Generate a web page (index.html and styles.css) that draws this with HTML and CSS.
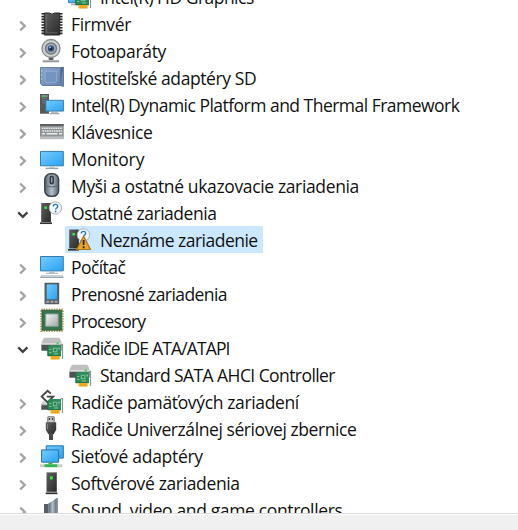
FILE: index.html
```html
<!DOCTYPE html>
<html lang="sk">

<head>
    <meta charset="UTF-8">
    <meta name="viewport" content="width=device-width, initial-scale=1.0">
    <title>Správca zariadení</title>
    <link rel="stylesheet" href="styles.css">
</head>

<body>
    <main class="window">
        <ul class="tree">
            <li class="row child hd">
                <svg class="icon" viewBox="0 0 24 24">
                    <path d="M.5 6h17v12.7H.5z" fill="url(#screen)" stroke="#397ca7" />
                    <path d="M3 20.5h7" stroke="#aaa" stroke-width="1.5" />
                    <use href="#card" />
                </svg>
                <span class="label">Intel(R) HD Graphics</span>
            </li>
            <li class="row firmware">
                <svg class="arrow"><use href="#closed" /></svg>
                <svg class="icon" viewBox="0 0 24 24">
                    <path d="M3 2v22M21 2v22" stroke="#242424" stroke-width="3" stroke-dasharray="1.6 1.2" />
                    <path d="M4.3 2h5q2.7 2.4 5.4 0h5v22H4.3z" fill="url(#dark)" stroke="#252525" />
                    <path d="M6.4 4v17.8h11.2" fill="none" stroke="#707070" stroke-width=".7" />
                </svg>
                <span class="label">Firmvér</span>
            </li>
            <li class="row camera">
                <svg class="arrow"><use href="#closed" /></svg>
                <svg class="icon" viewBox="0 0 24 24">
                    <path d="M8.7 18h4.7v4H8.7z" fill="#5b5d60" />
                    <path d="M2.7 23.3H19" stroke="#96999b" stroke-width="2" />
                    <circle cx="11" cy="10.5" r="9" fill="#d0d1d2" stroke="#85888a" stroke-width="1.3" />
                    <circle cx="11" cy="10.5" r="6.2" fill="#777b80" />
                    <circle cx="11" cy="10.5" r="4.7" fill="#a3b1c3" />
                    <circle cx="11" cy="10.5" r="3.2" fill="#395679" />
                    <circle cx="11" cy="10.8" r="1.5" fill="#172a44" />
                    <circle cx="10" cy="9.3" r="1" fill="#8fb0d7" />
                </svg>
                <span class="label">Fotoaparáty</span>
            </li>
            <li class="row host">
                <svg class="arrow"><use href="#closed" /></svg>
                <svg class="icon" viewBox="0 0 24 24">
                    <path d="M.5 2.6h19.8l3.2-.4v19.3l-3.2-1H2.3L.5 18.7z" fill="url(#sd)" stroke="#5c7298" stroke-width=".9" />
                    <path d="M20.3 2.7v17.7l3-18.1z" fill="#50688e" />
                    <path d="M5 6.3h11.8v9.8l-1.8 1.7H6.7L5 16.2z" fill="#7595c1" stroke="#a2b9d9" stroke-width=".7" />
                    <path d="M1.6 5v2M1.6 9v2M1.6 13v2" stroke="#bed1e9" stroke-width=".7" />
                </svg>
                <span class="label">Hostiteľské adaptéry SD</span>
            </li>
            <li class="row platform">
                <svg class="arrow"><use href="#closed" /></svg>
                <svg class="icon" viewBox="0 0 24 24">
                    <path d="M0 2h9v19.7H0z" fill="#55595b" />
                    <path d="M1.4 3.2h6.3v2H1.4z" fill="#8a9090" />
                    <path d="M2.5 3.2h2v2h-2z" fill="#30cc42" />
                    <path d="M2 6.8h5M2 8.8h3M2 10.8h3" stroke="#777d7f" />
                    <path d="M5.8 8.3h17.7v10.8H5.8z" fill="url(#screen)" stroke="#317aa8" stroke-width=".9" />
                    <path d="M11 20.1h7M9.5 21.6h10" stroke="#9fabb3" stroke-width="1.1" />
                </svg>
                <span class="label">Intel(R) Dynamic Platform and Thermal Framework</span>
            </li>
            <li class="row keyboard">
                <svg class="arrow"><use href="#closed" /></svg>
                <svg class="icon" viewBox="0 0 24 24">
                    <path d="M0 5h23.7v15H0z" fill="#8e9396" />
                    <path d="M0 6h23.7" stroke="#5d6063" stroke-width="2" />
                    <path d="M1.7 9.3h20.5M2.4 12h19.5" stroke="#eee" stroke-width="1.6" stroke-dasharray="1.6 .7" />
                    <path d="M2 14.7h3M6.5 14.7h11M19 14.7h3" stroke="#eee" stroke-width="1.5" />
                    <path d="M0 17.4h23.7v2.8H0z" fill="#b9bdbf" />
                </svg>
                <span class="label">Klávesnice</span>
            </li>
            <li class="row monitors">
                <svg class="arrow"><use href="#closed" /></svg>
                <svg class="icon" viewBox="0 0 24 24">
                    <path d="M.5 5.4h22.8v14.4H.5z" fill="url(#screen)" stroke="#367ca6" />
                    <path d="M9 20.3h5.6v1.4H9z" fill="#bbc7ce" />
                    <path d="M5.5 22.4h12.8" stroke="#91a5b1" stroke-width="1.4" />
                </svg>
                <span class="label">Monitory</span>
            </li>
            <li class="row mice">
                <svg class="arrow"><use href="#closed" /></svg>
                <svg class="icon" viewBox="0 0 24 24">
                    <rect x="4.8" y=".8" width="13.8" height="22.5" rx="5.8" fill="url(#steel)" stroke="#3c444c" stroke-width="1.5" />
                    <path d="M5.3 12.5q6.4 3 12.8 0" fill="none" stroke="#56626d" />
                    <rect x="9.5" y="2.6" width="4.4" height="9" rx="2" fill="#303941" />
                    <path d="M11.7 4.2v5.4" stroke="#9ba9b8" stroke-width="1.3" />
                </svg>
                <span class="label">Myši a ostatné ukazovacie zariadenia</span>
            </li>
            <li class="row other">
                <svg class="arrow"><use href="#open" /></svg>
                <svg class="icon" viewBox="0 0 24 24">
                    <path d="M1.2 3h9.7v19H1.2z" fill="url(#dark)" />
                    <path d="M4.3 6.4h2.8v2.5H4.3z" fill="#35e543" />
                    <path d="M0 23.2h12" stroke="#333" stroke-width="1.7" />
                    <use href="#bubble" />
                </svg>
                <span class="label">Ostatné zariadenia</span>
            </li>
            <li class="row child unknown selected">
                <svg class="icon" viewBox="0 0 24 24">
                    <path d="M1.2 2.5h9.7v19H1.2z" fill="url(#dark)" />
                    <path d="M4.3 6h2.8v2.5H4.3z" fill="#35e543" />
                    <path d="M0 22.8h11" stroke="#333" stroke-width="1.7" />
                    <use href="#bubble" />
                    <path d="M15.6 9.3 22.6 22.5H8.6z" fill="#e9a62c" stroke="#a8731d" stroke-width="1.2" stroke-linejoin="round" />
                    <path d="M15.6 13v5M15.6 19.3v1.9" stroke="#24211a" stroke-width="1.8" />
                </svg>
                <span class="label">Neznáme zariadenie</span>
            </li>
            <li class="row computer">
                <svg class="arrow"><use href="#closed" /></svg>
                <svg class="icon" viewBox="0 0 24 24">
                    <path d="M.5 2.5h22.8v14.4H.5z" fill="url(#screen)" stroke="#367ca6" />
                    <path d="M9 17.4h5.6v1.5H9z" fill="#aab9c2" />
                    <path d="M6 19.3h12" stroke="#a5b3bc" />
                    <path d="M1 21.6h21.8l.9 2.5H0z" fill="#9aa9b7" />
                    <path d="M2 22.3h20" stroke="#e1e8ee" stroke-width=".7" />
                </svg>
                <span class="label">Počítač</span>
            </li>
            <li class="row portable">
                <svg class="arrow"><use href="#closed" /></svg>
                <svg class="icon" viewBox="0 0 24 24">
                    <rect x="4.5" y="1.8" width="14.7" height="21.5" rx=".8" fill="#575c60" />
                    <path d="M6.7 3.4h10.4v14.9H6.7z" fill="url(#screen)" />
                    <path d="M6.2 20.8h3M10.4 20.8h3M14.6 20.8h3" stroke="#a6abae" stroke-width="2" />
                </svg>
                <span class="label">Prenosné zariadenia</span>
            </li>
            <li class="row cpu">
                <svg class="arrow"><use href="#closed" /></svg>
                <svg class="icon" viewBox="0 0 24 24">
                    <rect x="1.1" y="1.4" width="21.7" height="21.6" fill="none" stroke="#b99a4a" stroke-width="2" stroke-dasharray="1.3 1.25" />
                    <path d="M2 2.2h19.8v20H2z" fill="#37754e" stroke="#22563a" stroke-width=".8" />
                    <path d="M5.7 6h12.4v12.2H5.7z" fill="url(#metal)" stroke="#8fa598" />
                </svg>
                <span class="label">Procesory</span>
            </li>
            <li class="row ide">
                <svg class="arrow"><use href="#open" /></svg>
                <svg class="icon" viewBox="0 0 24 24">
                    <use href="#drive" />
                    <use href="#card" />
                </svg>
                <span class="label">Radiče IDE ATA/ATAPI</span>
            </li>
            <li class="row child sata">
                <svg class="icon" viewBox="0 0 24 24">
                    <use href="#drive" />
                    <use href="#card" />
                </svg>
                <span class="label">Standard SATA AHCI Controller</span>
            </li>
            <li class="row storage">
                <svg class="arrow"><use href="#closed" /></svg>
                <svg class="icon" viewBox="0 0 24 24">
                    <path d="M3.5 11.5h16l2.5 4H1z" fill="#cecfd0" />
                    <path d="M1 15.5h19V21H1z" fill="#85898b" />
                    <path d="M2 16.5h10v3.7H2z" fill="#4d5153" />
                    <path d="M10.8 4.6 7.6 1.8 1.6 7.5l6 6 5.6-5.8H6.8M13.2 7.7h1.2" fill="none" stroke="#fff" stroke-width="3" />
                    <path d="M10.8 4.6 7.6 1.8 1.6 7.5l6 6 5.6-5.8H6.8" fill="none" stroke="#444" stroke-width="1.8" />
                    <use href="#card" />
                </svg>
                <span class="label">Radiče pamäťových zariadení</span>
            </li>
            <li class="row usb">
                <svg class="arrow"><use href="#closed" /></svg>
                <svg class="icon" viewBox="0 0 24 24">
                    <path d="M7.8.8h6.4v6.5H7.8z" fill="#c8cacb" stroke="#74787a" />
                    <path d="M9.5 2v2M12.5 2v2" stroke="#333" stroke-width="1.2" />
                    <path d="M5.8 6.3h10.4v7.5l-2.5 4.5H8.3l-2.5-4.5z" fill="url(#dark)" />
                    <path d="M9 17h4v7H9z" fill="#494949" />
                    <path d="M7.4 7.5v6" stroke="#888" />
                </svg>
                <span class="label">Radiče Univerzálnej sériovej zbernice</span>
            </li>
            <li class="row network">
                <svg class="arrow"><use href="#closed" /></svg>
                <svg class="icon" viewBox="0 0 24 24">
                    <path d="M6.2 2.8h17.1v12.3H6.2z" fill="url(#screen)" stroke="#2773a3" />
                    <path d="M1.6 6.9h17v12.3h-17z" fill="url(#screen)" stroke="#2773a3" />
                    <path d="M8.4 19.6h4v2h-4z" fill="#35ae4a" />
                    <path d="M0 22.8h22.3" stroke="#c8cccb" stroke-width="3" />
                    <path d="M4.5 22.7h12.7" stroke="#35b84b" stroke-width="2.8" />
                </svg>
                <span class="label">Sieťové adaptéry</span>
            </li>
            <li class="row software">
                <svg class="arrow"><use href="#closed" /></svg>
                <svg class="icon" viewBox="0 0 24 24">
                    <path d="M6.5 2.4h10.3v19.4H6.5z" fill="url(#dark)" />
                    <path d="M10 6.4h2.8v3H10z" fill="#38e945" />
                    <path d="M5.7 23.3h11.8" stroke="#363636" stroke-width="1.8" />
                </svg>
                <span class="label">Softvérové zariadenia</span>
            </li>
            <li class="row sound">
                <svg class="arrow"><use href="#closed" /></svg>
                <svg class="icon" viewBox="0 0 24 24">
                    <path d="M4 7h4.5v11H4z" fill="#565d63" />
                    <path d="M8.5 6.5 16.8 1v22l-8.3-6z" fill="url(#steel)" />
                    <path d="M17.3 1v22" stroke="#777e84" />
                </svg>
                <span class="label">Sound, video and game controllers</span>
            </li>
        </ul>
    </main>
    <footer class="statusbar"></footer>

    <!-- shared shapes and gradients -->
    <svg class="defs" width="0" height="0">
        <defs>
            <linearGradient id="screen" x1="0" y1="0" x2="1" y2="1">
                <stop offset="0" stop-color="#75ccff" />
                <stop offset="1" stop-color="#2ba2f2" />
            </linearGradient>
            <linearGradient id="metal" x1="0" y1="0" x2="1" y2="1">
                <stop offset="0" stop-color="#f5f5f5" />
                <stop offset="1" stop-color="#a5a8aa" />
            </linearGradient>
            <linearGradient id="steel" x1="0" y1="0" x2="1" y2="0">
                <stop offset="0" stop-color="#596471" />
                <stop offset=".5" stop-color="#b4c0cc" />
                <stop offset="1" stop-color="#596471" />
            </linearGradient>
            <linearGradient id="dark" x1="0" y1="0" x2="1" y2="1">
                <stop offset="0" stop-color="#606060" />
                <stop offset="1" stop-color="#292929" />
            </linearGradient>
            <linearGradient id="sd" x1="0" y1="0" x2="1" y2="1">
                <stop offset="0" stop-color="#8ca8cf" />
                <stop offset="1" stop-color="#6280ae" />
            </linearGradient>
            <path id="closed" d="M3.2 1.6 7.8 6l-4.6 4.4" fill="none" stroke="#a3a3a3" stroke-width="2.3" />
            <path id="open" d="M1.2 3.4 5.8 7.8l4.6-4.4" fill="none" stroke="#404040" stroke-width="2.3" />
            <g id="card">
                <path d="M7.6 11.8 9.5 10H21v11H7.6z" fill="#2c8b58" />
                <path d="M7.8 12v8.8h13" fill="none" stroke="#17633c" stroke-width=".8" />
                <path d="M12.8 12.7h4.6v4.6h-4.6z" fill="#79bd95" />
                <path d="M14 13.8h2.3v2.3H14z" fill="#2a7d50" />
                <path d="M9.2 14h2v1h-2zM9.2 17h2v1h-2zM18.5 12.5h1.4v2h-1.4zM14 18.5h4v.9h-4z" fill="#8cc5a0" />
                <path d="M10.5 21h9.2v3.5h-9.2z" fill="#f5ad24" />
                <path d="M12.8 21.7v2.8M15.1 21.7v2.8M17.4 21.7v2.8" stroke="#d38b1a" stroke-width=".5" />
                <path d="M20.8 9.6h1.7v14.5" fill="none" stroke="#8e9496" stroke-width="1.2" />
            </g>
            <g id="drive">
                <path d="M5 2.8h13.3q1.2 0 1.8 1.2l2.3 5.3H.9L3.2 4q.6-1.2 1.8-1.2z" fill="#bfc0c1" />
                <path d="M1 8.8h21.4v6.8H1z" fill="#a2a4a5" />
                <path d="M1.8 10H15v5.6H1.8z" fill="#505355" />
                <path d="M1 8.8h21.4" stroke="#e2e3e3" stroke-width="1.2" />
                <path d="M16.5 7.5h2.4v1.8h-2.4z" fill="#42d552" />
            </g>
            <g id="bubble">
                <circle cx="15.4" cy="8" r="6.2" fill="#f4f6f8" stroke="#aeb3b8" stroke-width="1" />
                <path d="M13.3 6.4q0-2 2.2-2t2.2 1.9c0 1.7-2.1 1.6-2.1 3.3" fill="none" stroke="#2878bd" stroke-width="1.4" />
                <circle cx="15.6" cy="11.5" r=".9" fill="#2878bd" />
            </g>
        </defs>
    </svg>
</body>

</html>
```

FILE: styles.css
```css
body {
    margin: 0;
    height: 530px;
    display: flex;
    flex-direction: column;
    overflow: hidden;
    background: #fff;
    color: #111;
    font-family: "Open Sans", "Noto Sans", sans-serif;
    font-size: 17.5px;
}

.defs {
    flex: none;
}

.window {
    display: flex;
    flex-direction: column;
    justify-content: flex-end;
    height: 513px;
    flex-shrink: 0;
    overflow: hidden;
    border-bottom: 1px solid #dcdcdc;
}

.tree {
    list-style: none;
    margin: -17px 0 -10px;
    padding: 0;
}

.row {
    display: flex;
    align-items: flex-start;
    box-sizing: border-box;
    width: max-content;
    height: 27px;
    padding: 1px 5px 0 0;
    margin-left: 17px;
    letter-spacing: -0.36px;
}

.arrow {
    width: 12px;
    height: 12px;
    margin: 9px 11px 0 0;
}

.icon {
    width: 24px;
    height: 24px;
    margin-right: 7px;
    overflow: visible;
}

.child {
    margin-left: 65px;
    padding-left: 3px;
}

.child .icon {
    margin-right: 8px;
}

.selected {
    background: #cce8ff;
}

.label {
    line-height: 26px;
    white-space: nowrap;
}

/* label widths */
.hd,
.platform,
.unknown {
    letter-spacing: -0.52px;
}

.camera,
.network {
    letter-spacing: -0.3px;
}

.host {
    letter-spacing: -0.4px;
}

.monitors {
    letter-spacing: -0.1px;
}

.other {
    letter-spacing: -0.47px;
}

.usb {
    letter-spacing: -0.42px;
}

.portable {
    letter-spacing: -0.57px;
}

.computer,
.sata {
    letter-spacing: -0.57px;
}

.cpu {
    letter-spacing: -0.76px;
}

.ide {
    letter-spacing: -0.85px;
}

.statusbar {
    flex: 1;
    background: #f0f0f0;
    border-top: 1px solid #fff;
}
```
